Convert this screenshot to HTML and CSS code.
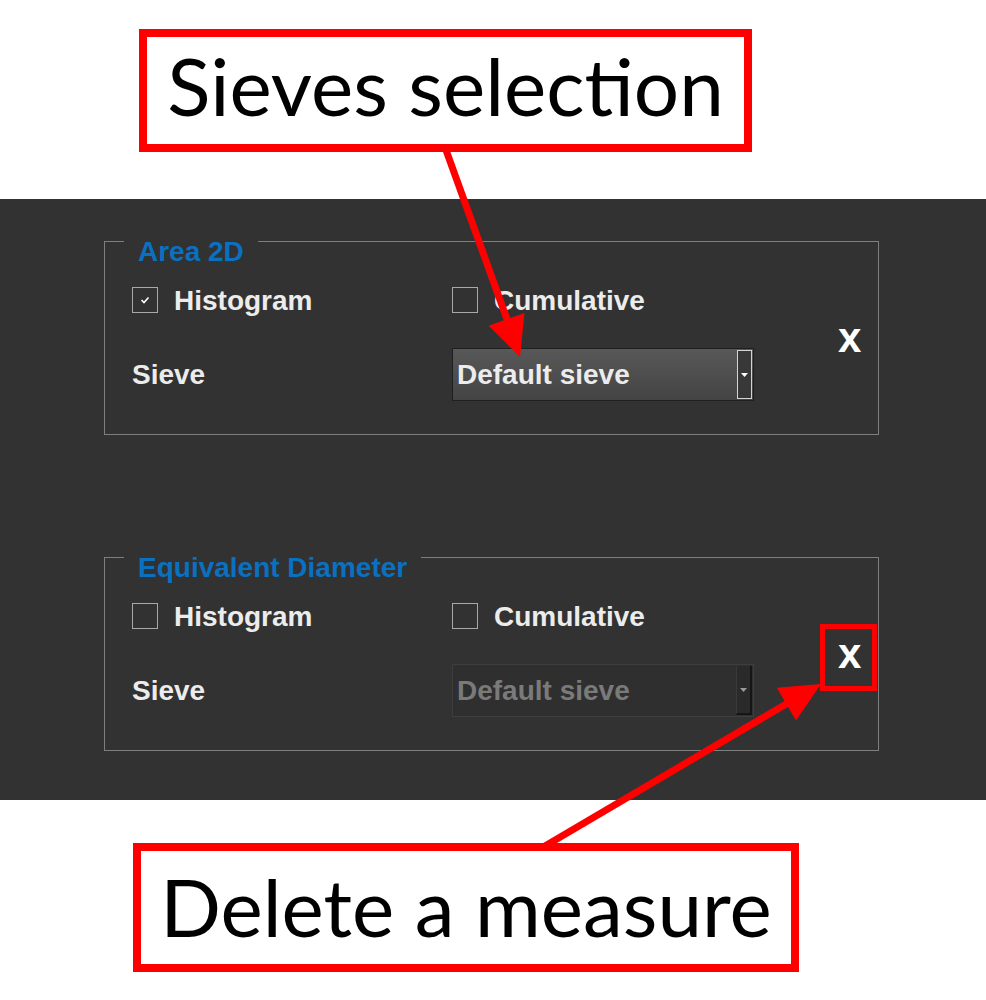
FILE: index.html
```html
<!DOCTYPE html>
<html lang="en">
<head>
    <meta charset="UTF-8">
    <title>Measures - sieves</title>
    <link rel="stylesheet" href="styles.css">
</head>
<body>
    <div class="page">
        <div class="top">
            <div class="callout callout-top">Sieves selection</div>
        </div>

        <div class="panel">
            <div class="group">
                <span class="legend">Area 2D</span>
                <div class="fields">
                    <label class="check">
                        <span class="box"><svg width="10" height="8" viewBox="0 0 10 8"><polyline points="1.5,4 4,6.5 8.5,1.5" fill="none" stroke="#fff" stroke-width="1.6"/></svg></span>
                        <span class="check-text">Histogram</span>
                    </label>
                    <label class="check"><span class="box"></span><span class="check-text">Cumulative</span></label>
                    <span class="field-label">Sieve</span>
                    <div class="select">
                        <span class="value">Default sieve</span>
                        <span class="drop"><svg width="7" height="4" viewBox="0 0 7 4"><polygon points="0,0 7,0 3.5,4" fill="#fff"/></svg></span>
                    </div>
                </div>
                <span class="remove">x</span>
            </div>

            <div class="group">
                <span class="legend">Equivalent Diameter</span>
                <div class="fields">
                    <label class="check"><span class="box"></span><span class="check-text">Histogram</span></label>
                    <label class="check"><span class="box"></span><span class="check-text">Cumulative</span></label>
                    <span class="field-label">Sieve</span>
                    <div class="select disabled">
                        <span class="value">Default sieve</span>
                        <span class="drop"><svg width="7" height="4" viewBox="0 0 7 4"><polygon points="0,0 7,0 3.5,4" fill="#9a9a9a"/></svg></span>
                    </div>
                </div>
                <span class="remove">x</span>
            </div>
        </div>

        <div class="bottom">
            <div class="callout callout-bottom">Delete a measure</div>
        </div>

        <!-- annotation arrows drawn over the screenshot -->
        <svg class="annotations" width="986" height="1000" viewBox="0 0 986 1000">
            <line x1="446" y1="150" x2="508" y2="322" stroke="#ff0000" stroke-width="7"/>
            <polygon points="520,357 524.5,312.9 488.7,325.7" fill="#ff0000"/>
            <line x1="545" y1="846" x2="788" y2="703" stroke="#ff0000" stroke-width="7"/>
            <polygon points="821,684 796,720.6 776.8,687.8" fill="#ff0000"/>
            <rect x="822.5" y="626.5" width="52" height="62" fill="none" stroke="#ff0000" stroke-width="5"/>
        </svg>
    </div>
</body>
</html>
```

FILE: styles.css
```css
body {
    margin: 0;
    background: #fff;
}
.page {
    position: relative;
    width: 986px;
    height: 1000px;
}
.top {
    height: 199px;
    box-sizing: border-box;
    padding: 29px 0 0 139px;
}
.bottom {
    padding: 43px 0 0 133px;
}
.callout {
    box-sizing: border-box;
    border: 8px solid #ff0000;
    background: #fff;
    display: flex;
    align-items: center;
    justify-content: center;
    font-family: Lato, sans-serif;
    font-size: 80px;
    color: #000;
}
.callout-top {
    width: 613px;
    height: 123px;
    padding: 0 0 12px 0;
}
.callout-bottom {
    width: 666px;
    height: 129px;
    padding: 0 0 4px 0;
}
.panel {
    height: 601px;
    box-sizing: border-box;
    padding: 42px 107px 0 104px;
    background: #323232;
}
.group {
    position: relative;
    display: flex;
    align-items: center;
    border: 1px solid #7e7e7e;
    padding: 45px 0 33px 27px;
    font-family: "Liberation Sans", Arial, sans-serif;
    font-weight: bold;
    font-size: 28px;
    color: #ececec;
}
.group + .group {
    margin-top: 122px;
}
.legend {
    position: absolute;
    left: 19px;
    top: -6px;
    padding: 0 14px;
    line-height: 32px;
    background: #323232;
    color: #0a70c0;
}
.fields {
    display: grid;
    grid-template-columns: 320px 302px;
    grid-template-rows: 25px 53px;
    row-gap: 36px;
    align-items: center;
}
.check {
    display: flex;
    align-items: center;
    gap: 16px;
}
.check-text {
    padding-top: 3px;
}
.box {
    width: 24px;
    height: 24px;
    border: 1px solid #a8a8a8;
    display: flex;
    align-items: center;
    justify-content: center;
}
.select {
    height: 53px;
    box-sizing: border-box;
    display: flex;
    align-items: center;
    padding-left: 4px;
    border: 1px solid #1f1f1f;
    background: linear-gradient(#585858, #444);
}
.value {
    flex: 1;
}
.drop {
    align-self: stretch;
    width: 13px;
    margin: 1px 1px 1px 0;
    border: 1px solid #d4d4d4;
    background: #383838;
    display: flex;
    align-items: center;
    justify-content: center;
}
.select.disabled {
    border-color: #3e3e3e;
    background: #2f2f2f;
    color: #7a7a7a;
}
.select.disabled .drop {
    border: none;
    border-right: 2px solid #151515;
    border-bottom: 2px solid #151515;
    border-left: 1px solid #3a3a3a;
    background: #2a2a2a;
}
.remove {
    margin: 0 0 12px 84px;
    font-size: 42px;
    line-height: 1;
    color: #fff;
}
.annotations {
    position: absolute;
    top: 0;
    left: 0;
    pointer-events: none;
}
```
